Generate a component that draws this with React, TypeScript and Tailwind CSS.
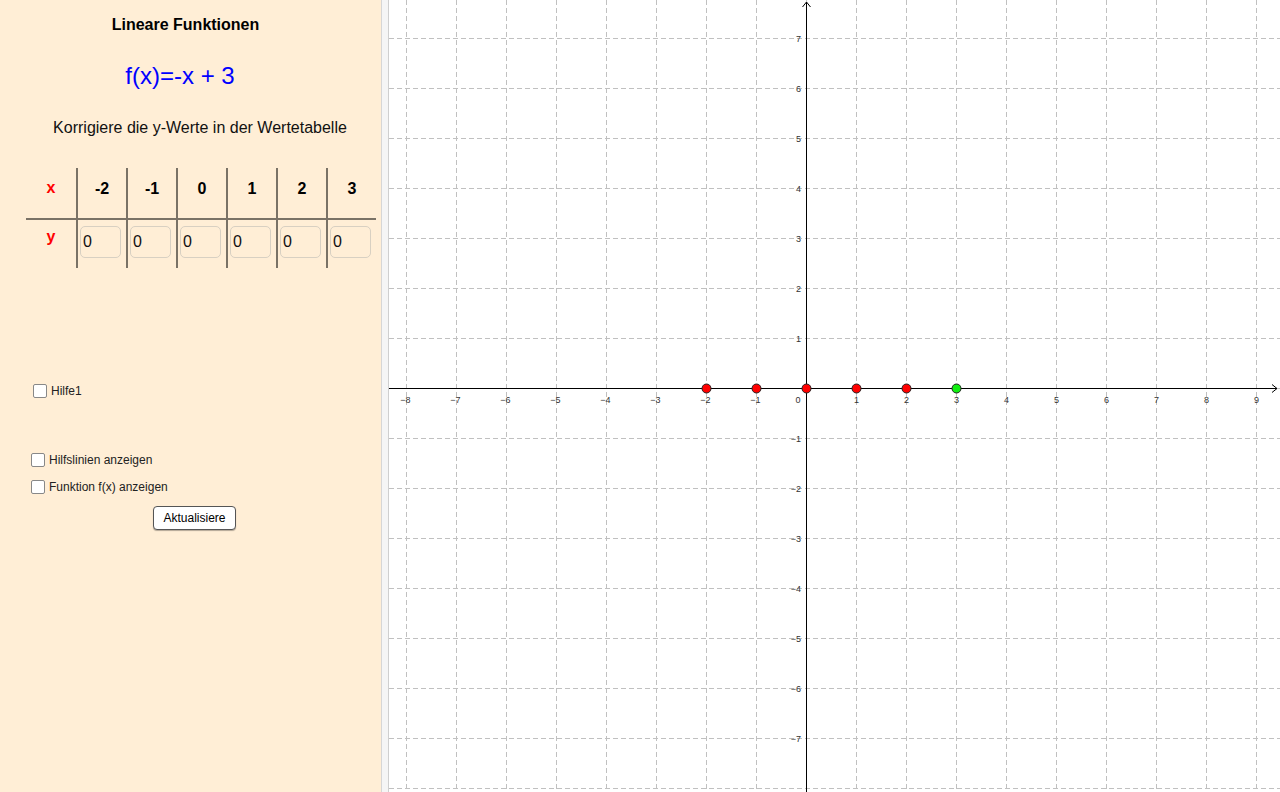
import React from "react";

const OX = 417.5;
const OY = 388.5;
const U = 50;

function Graph() {
  const xs: number[] = [];
  for (let k = -8; k <= 9; k++) xs.push(k);
  const ys: number[] = [];
  for (let k = -7; k <= 8; k++) ys.push(k);
  const label = (n: number) => (n < 0 ? "\u2212" + Math.abs(n) : String(n));
  return (
    <svg width="891" height="792" className="block" style={{ fontFamily: '"Liberation Sans", Arial, sans-serif' }}>
      {xs.map((k) => (
        <line key={"vx" + k} x1={OX + k * U} y1={0} x2={OX + k * U} y2={792} stroke="#c0c0c0" strokeWidth={1} strokeDasharray="5 3" />
      ))}
      {ys.map((k) => (
        <line key={"hy" + k} x1={0} y1={OY + k * U} x2={891} y2={OY + k * U} stroke="#c0c0c0" strokeWidth={1} strokeDasharray="5 3" />
      ))}
      <line x1={0} y1={OY} x2={888} y2={OY} stroke="#000" strokeWidth={1} />
      <polyline points={`883,384.5 888,388.5 883,392.5`} fill="none" stroke="#000" strokeWidth={1} />
      <line x1={OX} y1={2} x2={OX} y2={792} stroke="#000" strokeWidth={1} />
      <polyline points={`413.5,7 417.5,2 421.5,7`} fill="none" stroke="#000" strokeWidth={1} />
      {xs.filter((k) => k !== 0).map((k) => (
        <text key={"lx" + k} x={OX + k * U + (k < 0 ? -1 : 0)} y={403} fontSize={9} textAnchor="middle" fill="#333">
          {label(k)}
        </text>
      ))}
      <text x={409} y={403} fontSize={9} textAnchor="middle" fill="#333">0</text>
      {ys.filter((k) => k !== 0 && k !== 8).map((k) => (
        <text key={"ly" + k} x={412} y={OY + k * U + 3} fontSize={9} textAnchor="end" fill="#333">
          {label(-k)}
        </text>
      ))}
      {[-2, -1, 0, 1, 2].map((k) => (
        <circle key={"p" + k} cx={OX + k * U} cy={OY} r={4.5} fill="#ff0000" stroke="#222" strokeWidth={1} />
      ))}
      <circle cx={OX + 3 * U} cy={OY} r={4.5} fill="#11ee11" stroke="#222" strokeWidth={1} />
    </svg>
  );
}

function Checkbox({ label, ml, mt }: { label: string; ml: string; mt: string }) {
  return (
    <div className={`flex items-center gap-[4px] ${ml} ${mt}`}>
      <div className="w-[14px] h-[14px] bg-white border border-[#888] rounded-[2px]" />
      <span className="text-[12px] leading-[14px] text-[#222]">{label}</span>
    </div>
  );
}

export default function App() {
  const heads = ["-2", "-1", "0", "1", "2", "3"];
  return (
    <div className="flex w-[1280px] h-[792px] overflow-hidden bg-white" style={{ fontFamily: '"Liberation Sans", Arial, sans-serif' }}>
      <div className="w-[381px] h-full bg-[#ffeed6] flex flex-col shrink-0">
        <div className="pt-[15px] text-center pr-[10px] text-[16px] leading-[20px] font-bold text-black">Lineare Funktionen</div>
        <div className="mt-[27px] text-center pr-[21px] text-[24px] leading-[28px] text-[#0000ff]">f(x)=-x + 3</div>
        <div className="mt-[28px] text-center pl-[19px] text-[16px] leading-[20px] text-[#111]">Korrigiere die y-Werte in der Wertetabelle</div>
        <div className="mt-[30px] ml-[26px] w-[350px]">
          <div className="flex h-[52px] border-b-2 border-[#7a7266]">
            <div className="w-[50px] pt-[10px] text-center text-[16px] leading-[20px] font-bold text-[#ff0000]">x</div>
            {heads.map((h) => (
              <div key={h} className="w-[50px] border-l-2 border-[#7a7266] pt-[11px] text-center text-[16px] leading-[20px] font-bold text-black">
                {h}
              </div>
            ))}
          </div>
          <div className="flex h-[48px]">
            <div className="w-[50px] pt-[7px] text-center text-[16px] leading-[20px] font-bold text-[#ff0000]">y</div>
            {heads.map((h) => (
              <div key={h} className="w-[50px] border-l-2 border-[#7a7266] pt-[6px] pl-[2px]">
                <div className="w-[41px] h-[32px] border border-[#d8d0c2] rounded-[5px] pl-[2px] flex items-center text-[16px] text-[#111]">0</div>
              </div>
            ))}
          </div>
        </div>
        <Checkbox label="Hilfe1" ml="ml-[33px]" mt="mt-[116px]" />
        <Checkbox label="Hilfslinien anzeigen" ml="ml-[31px]" mt="mt-[55px]" />
        <Checkbox label="Funktion f(x) anzeigen" ml="ml-[31px]" mt="mt-[13px]" />
        <button className="mt-[12px] ml-[153px] w-[83px] h-[24px] bg-white border border-[#555] rounded-[4px] shadow-[0_1px_1px_rgba(0,0,0,0.3)] text-[12px] text-black">
          Aktualisiere
        </button>
      </div>
      <div className="w-[1px] h-full bg-[#d6d6d6] shrink-0" />
      <div className="w-[6px] h-full bg-[#f5f5f5] shrink-0" />
      <div className="w-[1px] h-full bg-[#cfcfcf] shrink-0" />
      <div className="flex-1 h-full overflow-hidden">
        <Graph />
      </div>
    </div>
  );
}
